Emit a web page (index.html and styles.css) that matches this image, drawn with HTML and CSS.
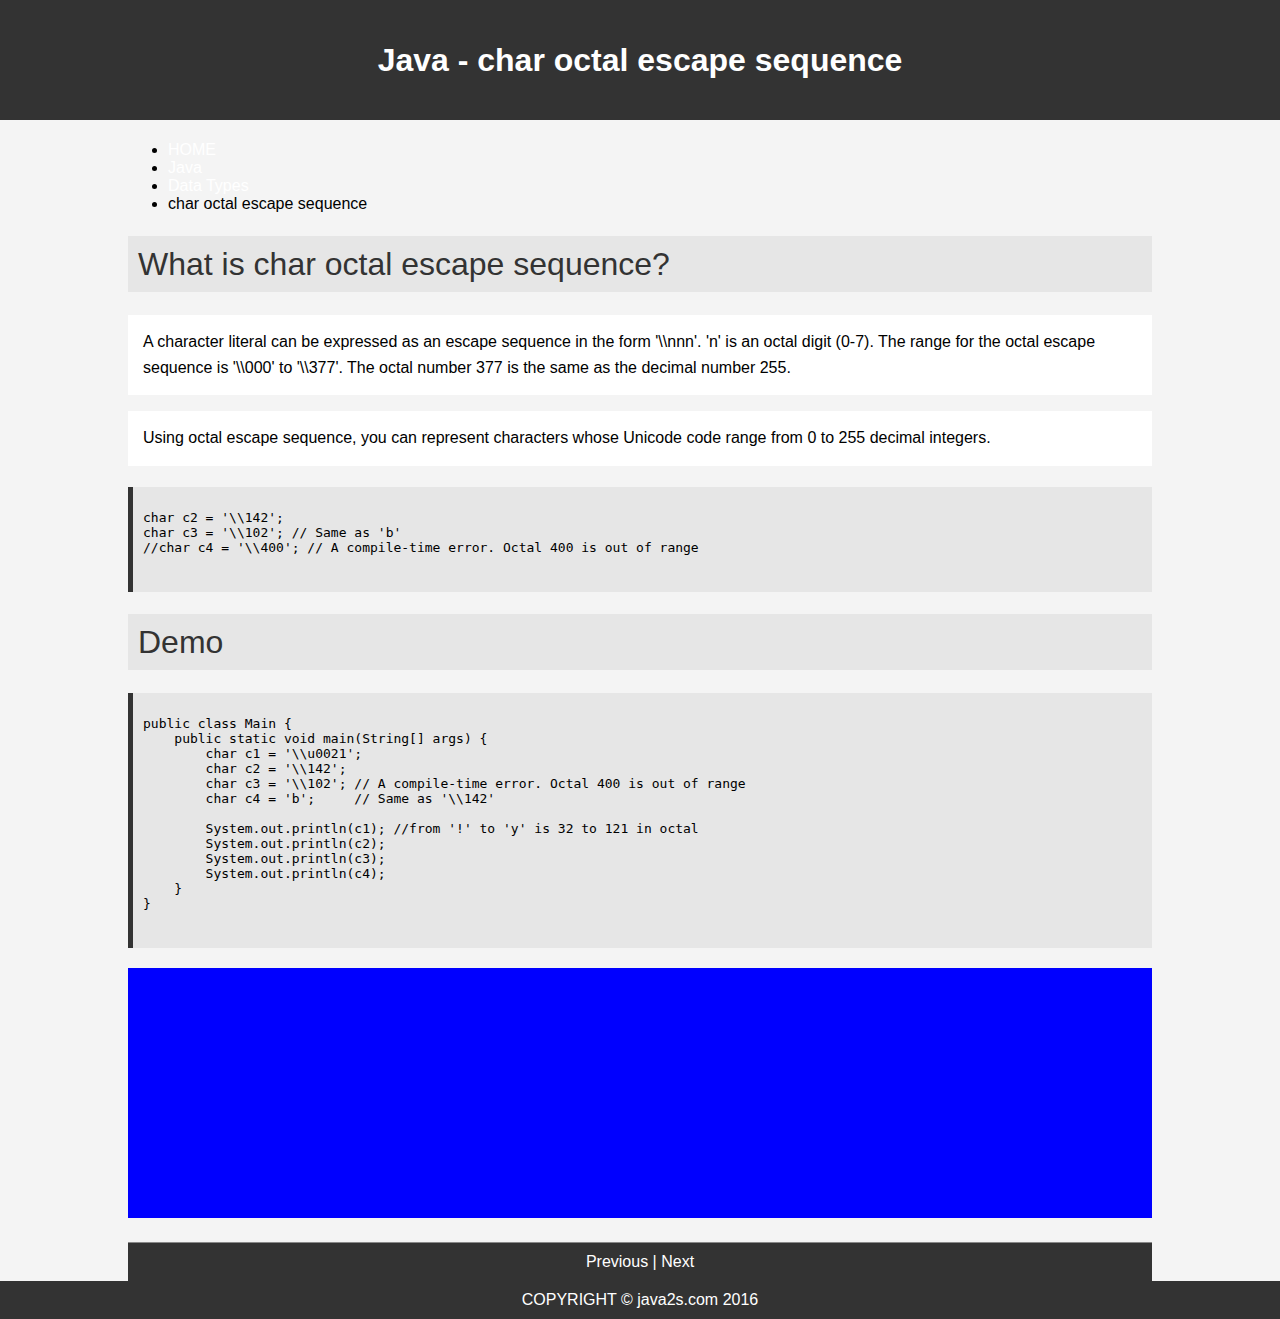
FILE: index.html
```html
<!DOCTYPE html>
<html>
<head>
<meta charset="utf-8">
<title>Java - char octal escape sequence</title>
<link rel="stylesheet" href="styles.css">
</head>
<body>
<header class="site-header">
  <h1 class="site-title">Java - char octal escape sequence</h1>
</header>
<main class="container">
  <ul class="crumbs">
    <li><a href="#">HOME</a></li>
    <li><a href="#">Java</a></li>
    <li><a href="#">Data Types</a></li>
    <li>char octal escape sequence</li>
  </ul>
  <h2 class="section-title first">What is char octal escape sequence?</h2>
  <p class="text-box first-p">A character literal can be expressed as an escape sequence in the form '\\nnn'. 'n' is an octal digit (0-7). The range for the octal escape sequence is '\\000' to '\\377'. The octal number 377 is the same as the decimal number 255.</p>
  <p class="text-box second-p">Using octal escape sequence, you can represent characters whose Unicode code range from 0 to 255 decimal integers.</p>
  <pre class="code">char c2 = '\\142';
char c3 = '\\102'; // Same as 'b'
//char c4 = '\\400'; // A compile-time error. Octal 400 is out of range</pre>
  <h2 class="section-title">Demo</h2>
  <pre class="code">public class Main {
    public static void main(String[] args) {
        char c1 = '\\u0021';
        char c2 = '\\142';
        char c3 = '\\102'; // A compile-time error. Octal 400 is out of range
        char c4 = 'b';     // Same as '\\142'

        System.out.println(c1); //from '!' to 'y' is 32 to 121 in octal
        System.out.println(c2);
        System.out.println(c3);
        System.out.println(c4);
    }
}</pre>
  <div class="blue-box"></div>
  <nav class="pager"><a href="#">Previous</a> | <a href="#">Next</a></nav>
</main>
<footer class="copyright">COPYRIGHT © java2s.com 2016</footer>
</body>
</html>
```

FILE: styles.css
```css
html, body {
  margin: 0;
  padding: 0;
}
body {
  background: #f4f4f4;
  font-family: "Liberation Sans", Arial, sans-serif;
  font-size: 16px;
  color: #000;
}
.site-header {
  background: #333333;
  height: 120px;
  display: flex;
  align-items: center;
  justify-content: center;
}
.site-title {
  margin: 0;
  color: #fff;
  font-size: 32px;
  font-weight: bold;
  line-height: 37px;
}
.container {
  width: 1024px;
  margin: 0 auto;
  display: flex;
  flex-direction: column;
}
.crumbs {
  margin: 21px 0 0 0;
  padding-left: 40px;
  line-height: 18px;
}
.crumbs a {
  color: #fff;
  text-decoration: none;
}
.section-title {
  margin: 22px 0 0 0;
  background: #e6e6e6;
  color: #333;
  font-size: 32px;
  font-weight: normal;
  line-height: 36px;
  padding: 10px 10px;
}
.section-title.first {
  margin-top: 23px;
}
.text-box {
  margin: 0;
  background: #fff;
  padding: 14px 15px;
  line-height: 26px;
}
.first-p {
  margin-top: 23px;
}
.second-p {
  margin-top: 16px;
  padding-bottom: 15px;
}
.code {
  margin: 21px 0 0 0;
  background: #e6e6e6;
  border-left: 5px solid #333;
  padding: 23px 10px 37px 10px;
  font-family: "DejaVu Sans Mono", monospace;
  font-size: 13px;
  line-height: 15px;
  color: #000;
  white-space: pre;
}
.section-title + .code {
  margin-top: 23px;
}
.blue-box {
  margin-top: 20px;
  height: 250px;
  background: #0000ff;
}
.pager {
  margin-top: 24px;
  background: #333;
  border-top: 1px solid #888;
  height: 38px;
  line-height: 38px;
  text-align: center;
  color: #fff;
}
.pager a {
  color: #fff;
  text-decoration: none;
}
.copyright {
  background: #333;
  color: #fff;
  height: 38px;
  line-height: 38px;
  text-align: center;
}
```
